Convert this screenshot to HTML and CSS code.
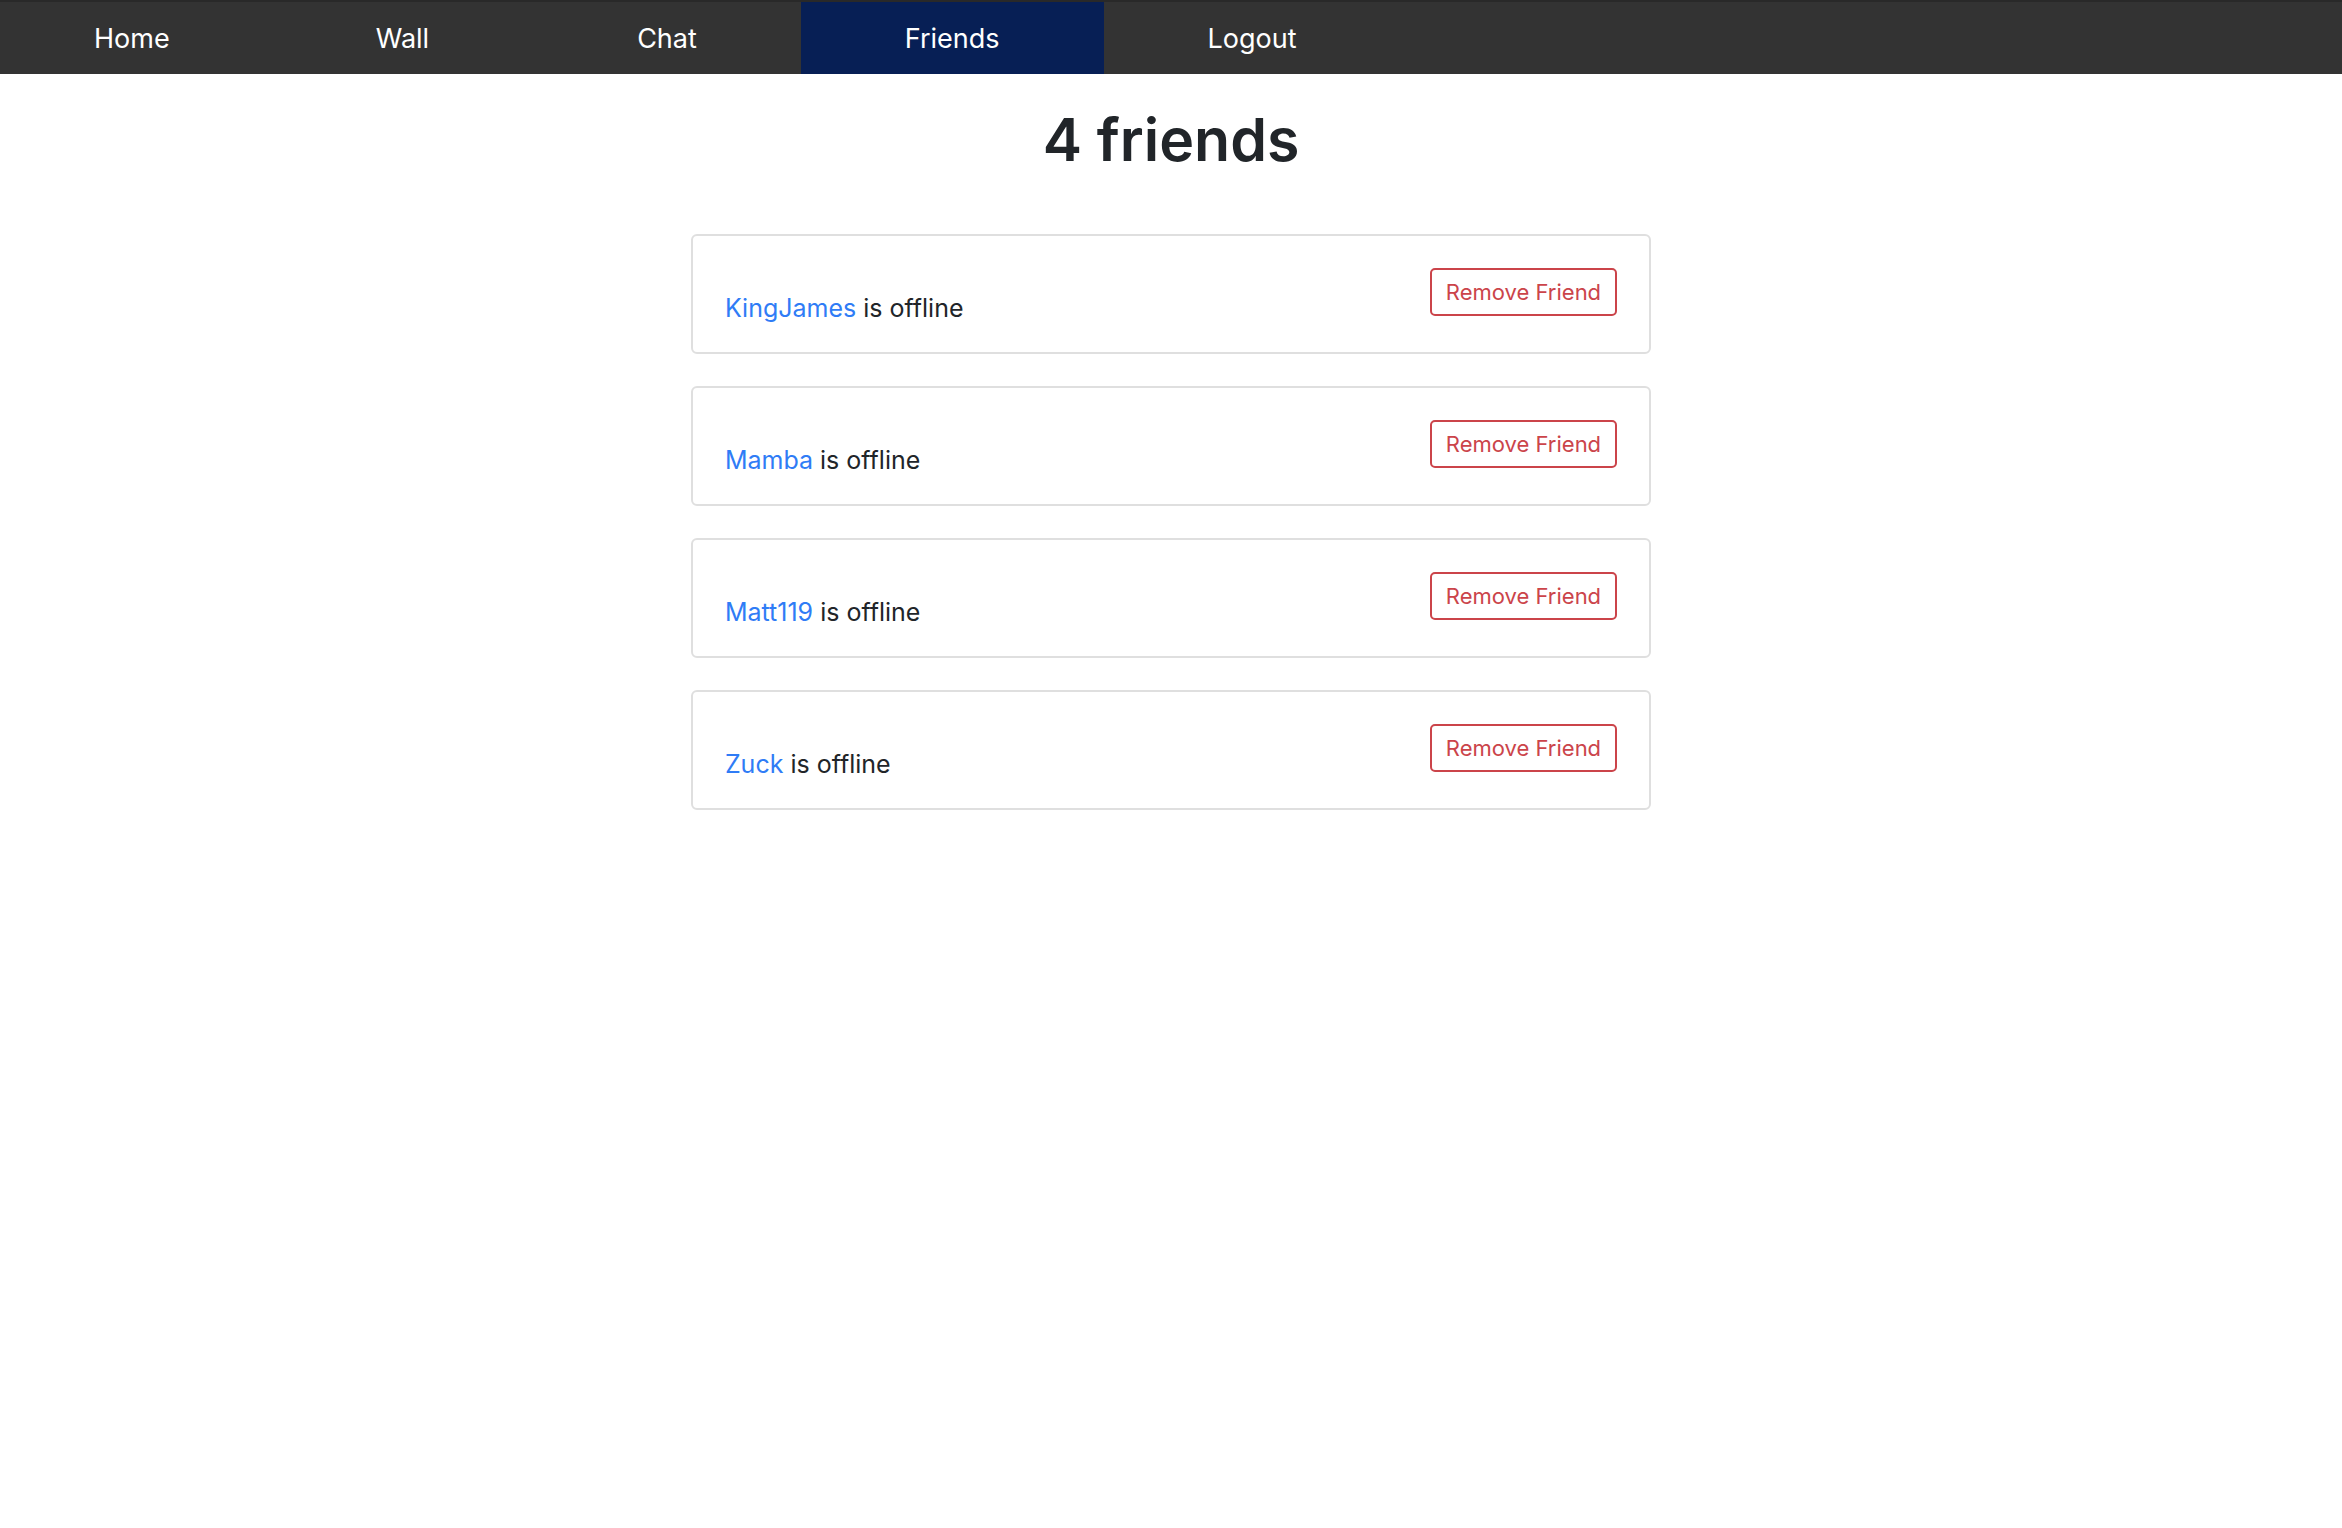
FILE: index.html
```html
<!DOCTYPE html>
<html lang="en">
<head>
<meta charset="utf-8">
<title>Friends</title>
<link rel="stylesheet" href="styles.css">
</head>
<body>
<nav class="navbar">
  <a class="nav-link" href="#home">Home</a>
  <a class="nav-link" href="#wall">Wall</a>
  <a class="nav-link" href="#chat">Chat</a>
  <a class="nav-link active" href="#friends" aria-current="page">Friends</a>
  <a class="nav-link" href="#logout">Logout</a>
</nav>
<main class="content">
  <h1 class="title">4 friends</h1>
  <ul class="friends">
    <li class="card"><p class="status"><a href="#kingjames">KingJames</a> is offline</p><button class="remove" type="button">Remove Friend</button></li>
    <li class="card"><p class="status"><a href="#mamba">Mamba</a> is offline</p><button class="remove" type="button">Remove Friend</button></li>
    <li class="card"><p class="status"><a href="#matt119">Matt119</a> is offline</p><button class="remove" type="button">Remove Friend</button></li>
    <li class="card"><p class="status"><a href="#zuck">Zuck</a> is offline</p><button class="remove" type="button">Remove Friend</button></li>
  </ul>
</main>
</body>
</html>
```
FILE: styles.css
```css
* { box-sizing: border-box; }
body {
  margin: 0;
  background: #fff;
  color: #212529;
  font: 25px/40px Inter, sans-serif;
}
a { color: #2f7cf6; text-decoration: none; }
.navbar {
  display: flex;
  height: 74px;
  background: #333;
  border-top: 2px solid #292929;
}
.nav-link {
  display: flex;
  align-items: center;
  padding: 2px 104px 0;
  color: #fff;
  font-size: 27px;
}
.nav-link:first-child { padding: 2px 102px 0 94px; }
.nav-link.active { background: #071f55; }
.content {
  width: 41%;
  margin: 0 auto;
}
.title {
  margin: 28px 0 56px;
  font-size: 59px;
  line-height: 76px;
  font-weight: 600;
  text-align: center;
}
.friends {
  display: grid;
  gap: 32px;
  margin: 0;
  padding: 0;
  list-style: none;
}
.card {
  display: flex;
  justify-content: space-between;
  align-items: flex-start;
  padding: 32px 32px 24px;
  border: 2px solid #dfdfdf;
  border-radius: 6px;
}
.status { margin: 20px 0 0; }
.remove {
  padding: 8px 14px;
  border: 2px solid #cb444a;
  border-radius: 5px;
  background: transparent;
  color: #cb444a;
  font: 22px/28px Inter, sans-serif;
}
```
